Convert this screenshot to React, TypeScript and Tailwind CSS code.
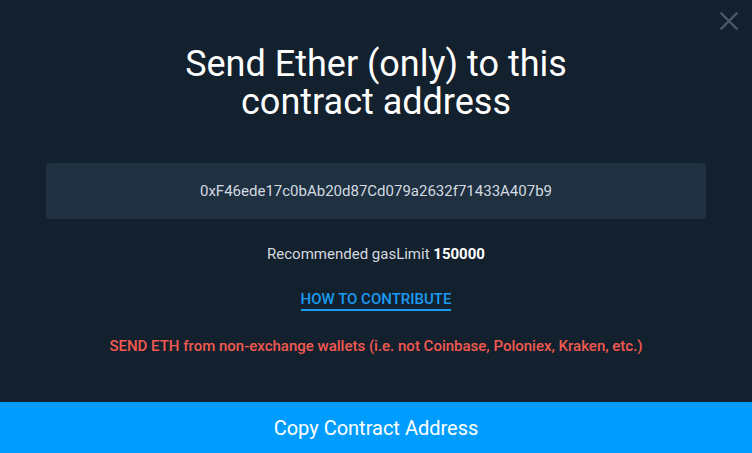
import React from 'react';

const ADDRESS = '0xF46ede17c0bAb20d87Cd079a2632f71433A407b9';

const CloseIcon = () => (
  <svg width="18" height="18" viewBox="0 0 18 18" className="text-[#4b5866]">
    <path d="M1.5 1.5 L16.5 16.5 M16.5 1.5 L1.5 16.5" stroke="currentColor" strokeWidth="2.4" strokeLinecap="square" />
  </svg>
);

export default function App() {
  return (
    <div className="relative w-[752px] h-[453px] bg-[#13202e] flex flex-col font-['Roboto',sans-serif] overflow-hidden">
      <button className="absolute top-[12px] right-[14px] p-0">
        <CloseIcon />
      </button>

      <div className="flex-1 flex flex-col items-center pt-[45px]">
        <h1 className="text-[36px] leading-[38px] text-white text-center font-normal">
          Send Ether (only) to this
          <br />
          contract address
        </h1>

        <div className="mt-[42px] w-[660px] h-[56px] rounded-[3px] bg-[#1f3040] flex items-center justify-center">
          <span className="text-[15px] text-[#d3dae1]">{ADDRESS}</span>
        </div>

        <p className="mt-[25px] text-[15px] leading-[20px] text-[#d3d9df]">
          Recommended gasLimit <span className="font-bold text-white">150000</span>
        </p>

        <a className="mt-[25px] text-[15px] leading-[20px] font-medium uppercase text-[#1a9bf2] border-b-2 border-[#1a9bf2]">
          How to contribute
        </a>

        <p className="mt-[25px] text-[15px] leading-[20px] font-medium text-[#f25a50]">
          SEND ETH from non-exchange wallets (i.e. not Coinbase, Poloniex, Kraken, etc.)
        </p>
      </div>

      <button className="h-[51px] w-full bg-[#009dff] text-white text-[20px] flex items-center justify-center">
        Copy Contract Address
      </button>
    </div>
  );
}
